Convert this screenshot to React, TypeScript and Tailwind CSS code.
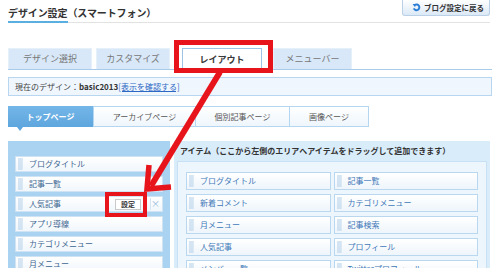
import React from "react";

const leftItems = ["ブログタイトル", "記事一覧", "人気記事", "アプリ導線", "カテゴリメニュー", "月メニュー"];
const rightItems = [
  "ブログタイトル", "記事一覧",
  "新着コメント", "カテゴリメニュー",
  "月メニュー", "記事検索",
  "人気記事", "プロフィール",
  "メンバー一覧", "Twitterプロフィール",
];

function Grip() {
  return (
    <div className="ml-[2px] w-[5px] h-[12px] border-r border-[#dbe9f5] bg-[radial-gradient(circle,#a9c9e6_0.6px,transparent_0.8px)] bg-[length:2px_2px]" />
  );
}

export default function App() {
  return (
    <div className="relative w-[500px] h-[268px] overflow-hidden bg-white font-['Noto_Sans_CJK_JP',sans-serif] text-[8px] text-[#444]">
      {/* header */}
      <div className="flex justify-between items-start pl-[8px] pr-[10px] h-[21px]">
        <div className="pt-[7px] leading-[12px] text-[10px] font-bold text-[#333] tracking-[-0.1px]">
          デザイン設定（スマートフォン）
        </div>
        <div className="flex items-center gap-[3px] h-[16px] w-[88px] pl-[9px] rounded-b-[3px] border border-t-0 border-[#b9d0e6] bg-gradient-to-b from-[#ffffff] to-[#dbe9f6] text-[7.5px] font-bold text-[#333]">
          <svg width="9" height="9" viewBox="0 0 10 10">
            <path d="M2 6 A3.2 3.2 0 1 0 3 2.2" fill="none" stroke="#2a7fd4" strokeWidth="2.2" />
            <path d="M0.6 1 L4.4 1 L3.4 4.6 Z" fill="#2a7fd4" />
          </svg>
          <span>ブログ設定に戻る</span>
        </div>
      </div>
      <div className="flex mx-[8px] mr-[10px] h-[2px] items-end">
        <div className="w-[60px] h-[2px] bg-[#5aaee0]" />
        <div className="flex-1 h-[1px] bg-[#e2e2e2]" />
      </div>

      {/* main tabs */}
      <div className="flex items-end mt-[24px] mx-[8px] h-[23px] border-b border-[#a9cbea] text-[9px]">
        <div className="w-[84px] h-[21px] flex items-center justify-center bg-[#d8e8f8] text-[#777] border border-b-0 border-[#e6f0fa]">デザイン選択</div>
        <div className="ml-[4px] w-[74px] h-[21px] flex items-center justify-center bg-[#d8e8f8] text-[#777] border border-b-0 border-[#e6f0fa]">カスタマイズ</div>
        <div className="ml-[12px] w-[80px] h-[22px] -mb-px flex items-center justify-center bg-white text-[#3a3a3a] font-bold border border-b-0 border-[#9dc3e6]">レイアウト</div>
        <div className="ml-[11px] w-[79px] h-[21px] flex items-center justify-center bg-[#d8e8f8] text-[#777] border border-b-0 border-[#e6f0fa]">メニューバー</div>
      </div>

      {/* info bar */}
      <div className="mt-[7px] mx-[8px] mr-[8px] h-[19px] flex items-center pl-[6px] bg-[#eff6fd] border border-[#b8d6ef] text-[8px] text-[#444]">
        <span>現在のデザイン：</span>
        <span className="font-bold text-[#333]">basic2013</span>
        <span className="text-[#2d68c4] underline">[表示を確認する]</span>
      </div>

      {/* sub tabs */}
      <div className="relative flex mt-[10px] mx-[8px] h-[21px] text-[8px]">
        <div className="relative w-[85px] flex items-center justify-center bg-gradient-to-b from-[#74b6e8] to-[#5ea6de] text-white font-bold">
          トップページ
          <div className="absolute left-[9px] top-[21px] w-0 h-0 border-l-[3px] border-r-[3px] border-t-[4px] border-l-transparent border-r-transparent border-t-[#5ea6de]" />
        </div>
        <div className="w-[103px] flex items-center justify-center bg-gradient-to-b from-white to-[#eef6fc] border border-[#b4d6f0] text-[#555]">アーカイブページ</div>
        <div className="w-[94px] flex items-center justify-center bg-gradient-to-b from-white to-[#eef6fc] border border-l-0 border-[#b4d6f0] text-[#555]">個別記事ページ</div>
        <div className="w-[79px] flex items-center justify-center bg-gradient-to-b from-white to-[#eef6fc] border border-l-0 border-[#b4d6f0] text-[#555]">画像ページ</div>
      </div>

      {/* panels */}
      <div className="flex gap-[4px] mt-[14px] mx-[8px] mr-[10px] h-[200px]">
        <div className="w-[162px] bg-[#a9d3f1] pt-[15px] px-[7px] flex flex-col gap-[4px]">
          {leftItems.map((t) => (
            <div key={t} className="h-[16px] flex items-center bg-gradient-to-b from-white to-[#f1f7fc] border border-[#cfe3f3] text-[#3d6690]">
              <Grip />
              <span className="ml-[6px] flex-1">{t}</span>
              {t === "人気記事" && (
                <>
                  <span className="w-[26px] h-[11px] flex items-center justify-center bg-white border border-[#c9c9c9] text-[7px] font-bold text-[#333]">設定</span>
                  <span className="ml-[9px] mr-[2px] w-[10px] h-[12px] flex items-center justify-center border-l border-[#d5e5f2] text-[#8fb6d8] text-[9px]">×</span>
                </>
              )}
            </div>
          ))}
        </div>
        <div className="flex-1 bg-[#d9ecfa] px-[3px] flex flex-col">
          <div className="h-[20px] flex items-center pl-[3px] font-bold text-[#333]">
            アイテム（ここから左側のエリアへアイテムをドラッグして追加できます）
          </div>
          <div className="flex-1 bg-[#eef6fd] border border-[#c8e0f3] pt-[10px] px-[8px] grid grid-cols-2 gap-x-[3px] gap-y-[4px] content-start">
            {rightItems.map((t, i) => (
              <div key={i} className="h-[18px] flex items-center bg-gradient-to-b from-white to-[#eef5fb] border border-[#b9d8ef] text-[#3f78b8]">
                <Grip />
                <span className="ml-[6px]">{t}</span>
              </div>
            ))}
          </div>
        </div>
      </div>

      {/* annotations */}
      <svg className="absolute inset-0 pointer-events-none" width="500" height="268" viewBox="0 0 500 268">
        <rect x="176.5" y="42.5" width="94" height="28" fill="none" stroke="#e8141c" strokeWidth="5" />
        <rect x="107" y="194" width="38" height="21" fill="none" stroke="#e8141c" strokeWidth="4" />
        <line x1="220" y1="72" x2="151" y2="186" stroke="#e8141c" strokeWidth="6" />
        <polyline points="149,165 147,189 171,187" fill="none" stroke="#e8141c" strokeWidth="5.5" strokeLinejoin="miter" />
      </svg>
    </div>
  );
}
